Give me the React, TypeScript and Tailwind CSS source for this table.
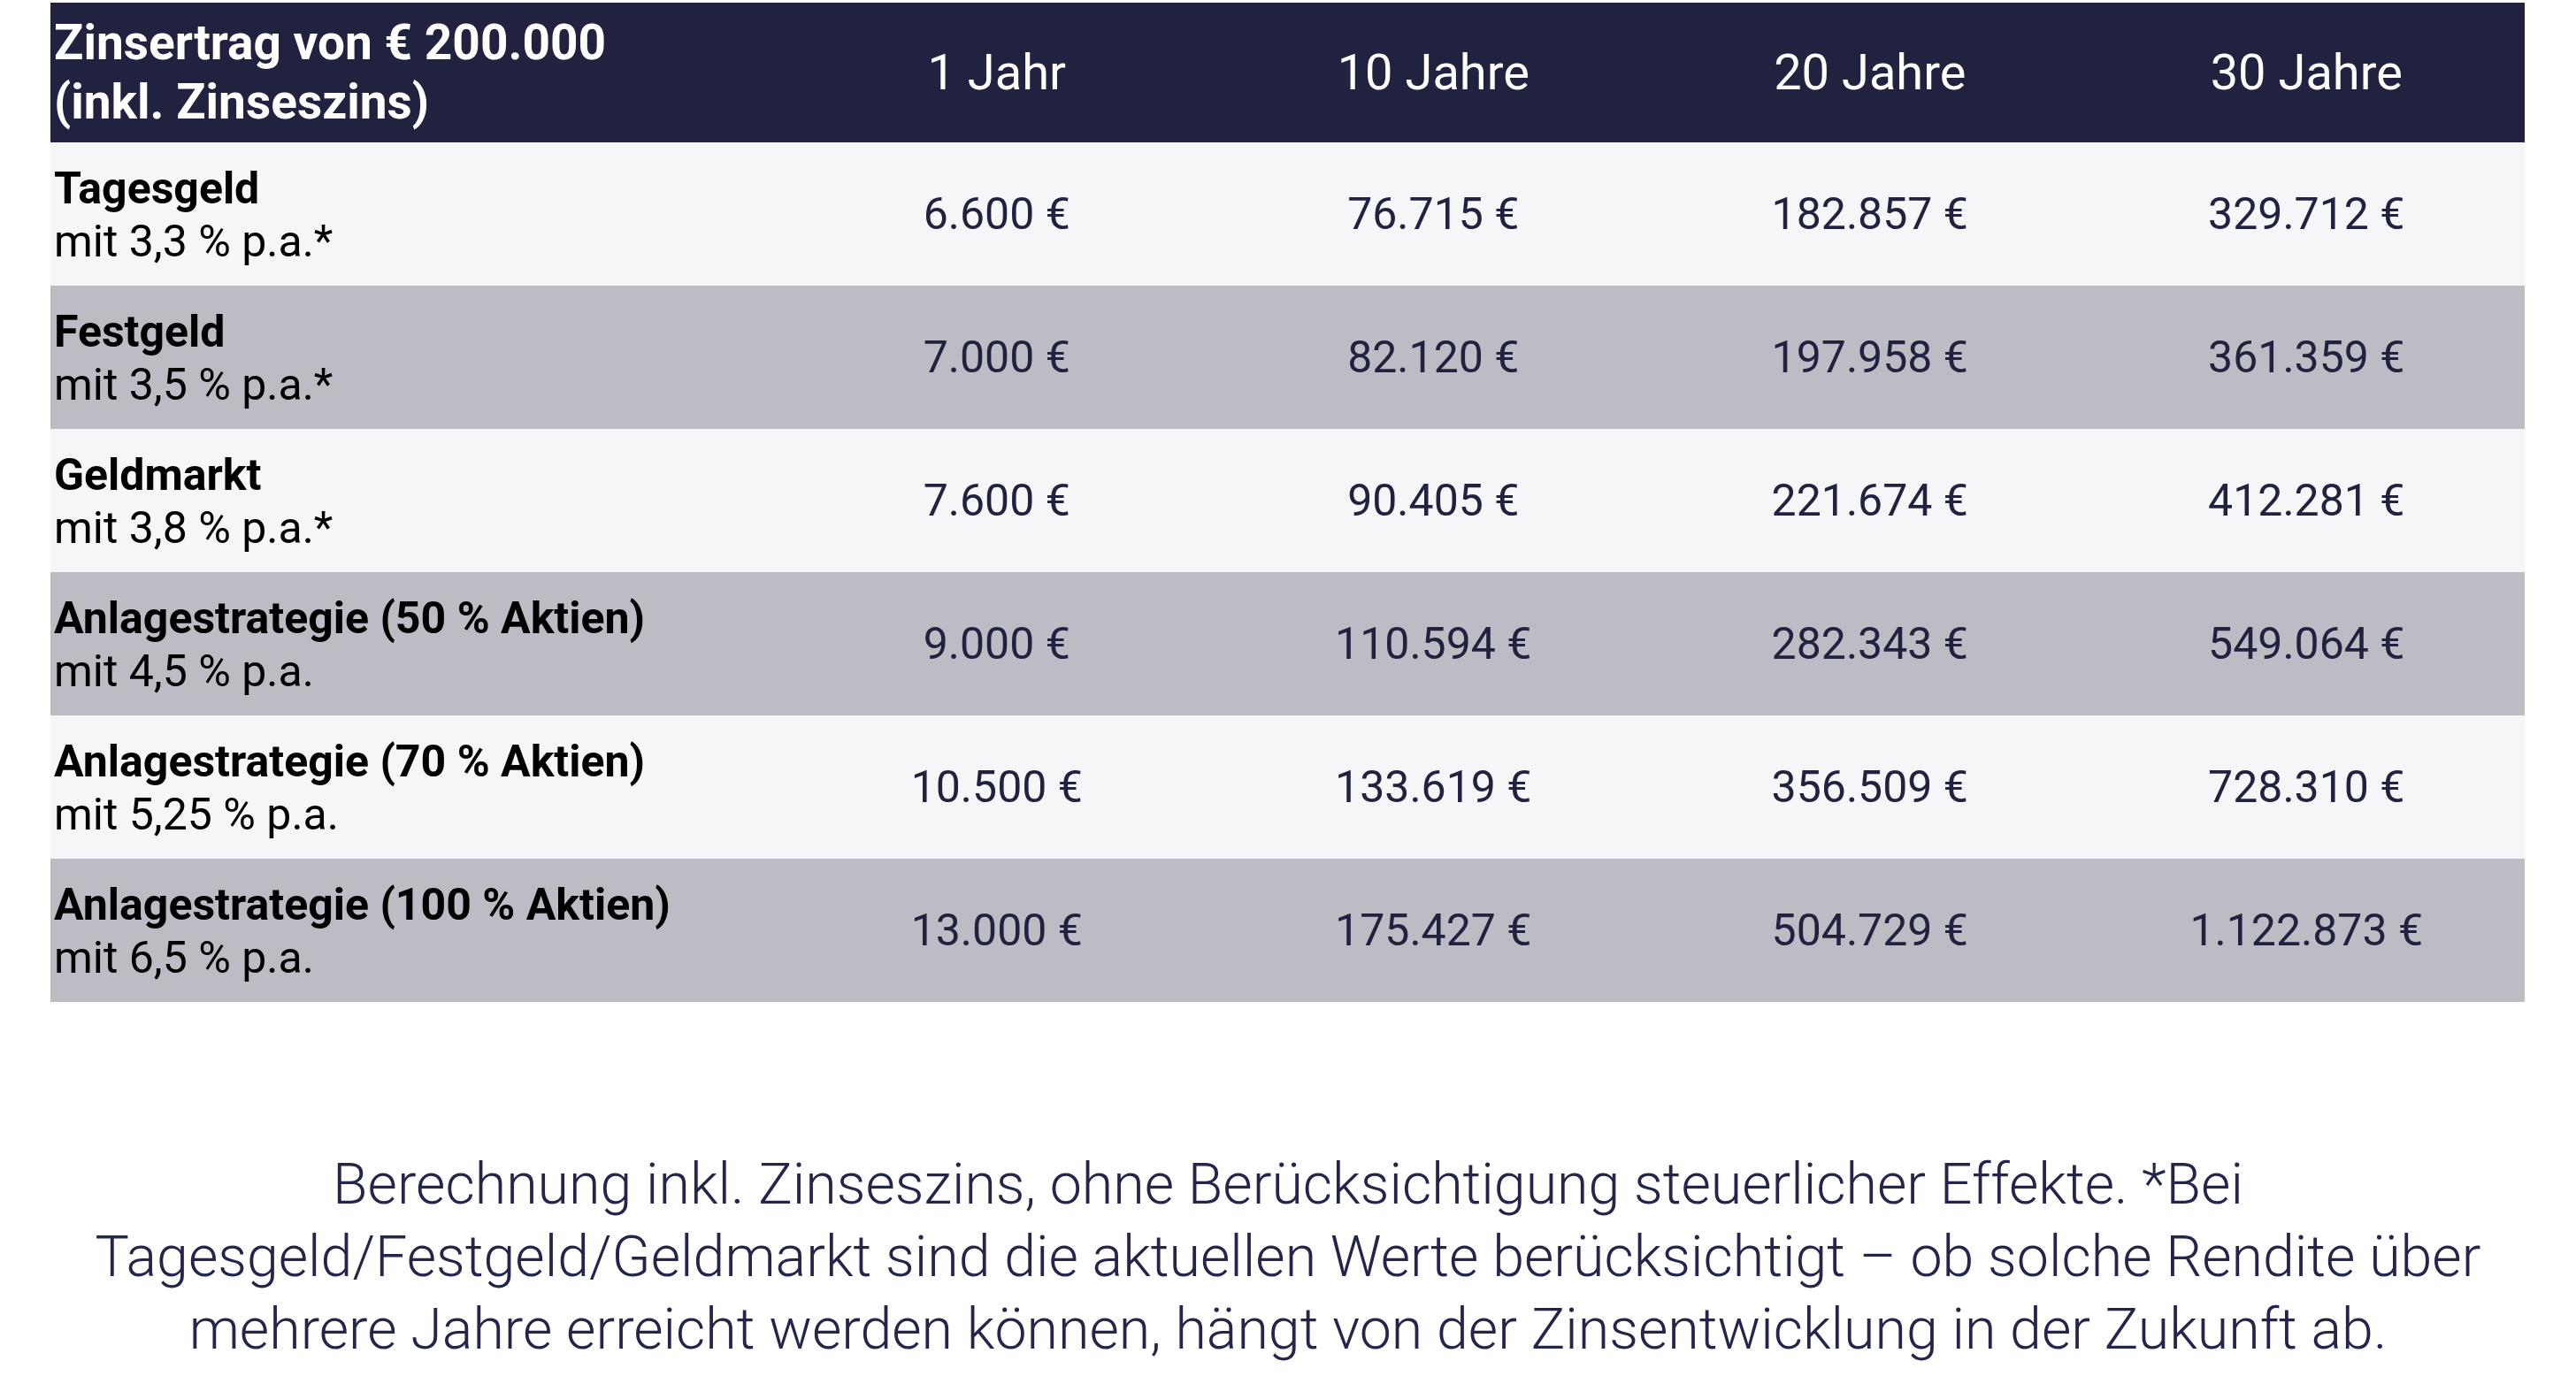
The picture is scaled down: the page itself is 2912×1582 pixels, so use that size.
import * as React from 'react';

interface Row {
  name: string;
  rate: string;
  values: string[];
}

const YEARS = ['1 Jahr', '10 Jahre', '20 Jahre', '30 Jahre'];

const ROWS: Row[] = [
  { name: 'Tagesgeld', rate: 'mit 3,3 % p.a.*', values: ['6.600 €', '76.715 €', '182.857 €', '329.712 €'] },
  { name: 'Festgeld', rate: 'mit 3,5 % p.a.*', values: ['7.000 €', '82.120 €', '197.958 €', '361.359 €'] },
  { name: 'Geldmarkt', rate: 'mit 3,8 % p.a.*', values: ['7.600 €', '90.405 €', '221.674 €', '412.281 €'] },
  { name: 'Anlagestrategie (50 % Aktien)', rate: 'mit 4,5 % p.a.', values: ['9.000 €', '110.594 €', '282.343 €', '549.064 €'] },
  { name: 'Anlagestrategie (70 % Aktien)', rate: 'mit 5,25 % p.a.', values: ['10.500 €', '133.619 €', '356.509 €', '728.310 €'] },
  { name: 'Anlagestrategie (100 % Aktien)', rate: 'mit 6,5 % p.a.', values: ['13.000 €', '175.427 €', '504.729 €', '1.122.873 €'] },
];

export default function App() {
  return (
    <div className="min-h-screen w-full bg-white font-['Roboto',sans-serif] pt-[3px]">
      <div className="mx-[57px] w-[2797px]">
        {/* header */}
        <div className="grid grid-cols-[823px_repeat(4,1fr)] h-[158px] bg-[#20223f] text-white">
          <div className="flex items-center pl-[4px] text-[55px] leading-[67px] font-bold">
            <p>
              Zinsertrag von € 200.000
              <br />
              (inkl. Zinseszins)
            </p>
          </div>
          {YEARS.map((y) => (
            <div key={y} className="flex items-center justify-center text-[56px] font-normal">
              {y}
            </div>
          ))}
        </div>

        {ROWS.map((r, i) => (
          <div
            key={r.name}
            className={
              i % 2 === 0
                ? 'grid grid-cols-[823px_repeat(4,1fr)] h-[162px] bg-[#f5f6f8]'
                : 'grid grid-cols-[823px_repeat(4,1fr)] h-[162px] bg-[#bcbcc4]'
            }
          >
            <div className="flex flex-col justify-center pl-[4px] pt-[2px] text-[50px] leading-[60px] text-black">
              <p className="font-bold">{r.name}</p>
              <p className="font-normal">{r.rate}</p>
            </div>
            {r.values.map((v, j) => (
              <div key={j} className="flex items-center justify-center text-[50px] text-[#20223f]">
                {v}
              </div>
            ))}
          </div>
        ))}
      </div>

      <p className="mt-[165px] text-center text-[64.5px] leading-[82px] font-light text-[#23254a]">
        Berechnung inkl. Zinseszins, ohne Berücksichtigung steuerlicher Effekte. *Bei
        <br />
        Tagesgeld/Festgeld/Geldmarkt sind die aktuellen Werte berücksichtigt – ob solche Rendite über
        <br />
        mehrere Jahre erreicht werden können, hängt von der Zinsentwicklung in der Zukunft ab.
      </p>
    </div>
  );
}
